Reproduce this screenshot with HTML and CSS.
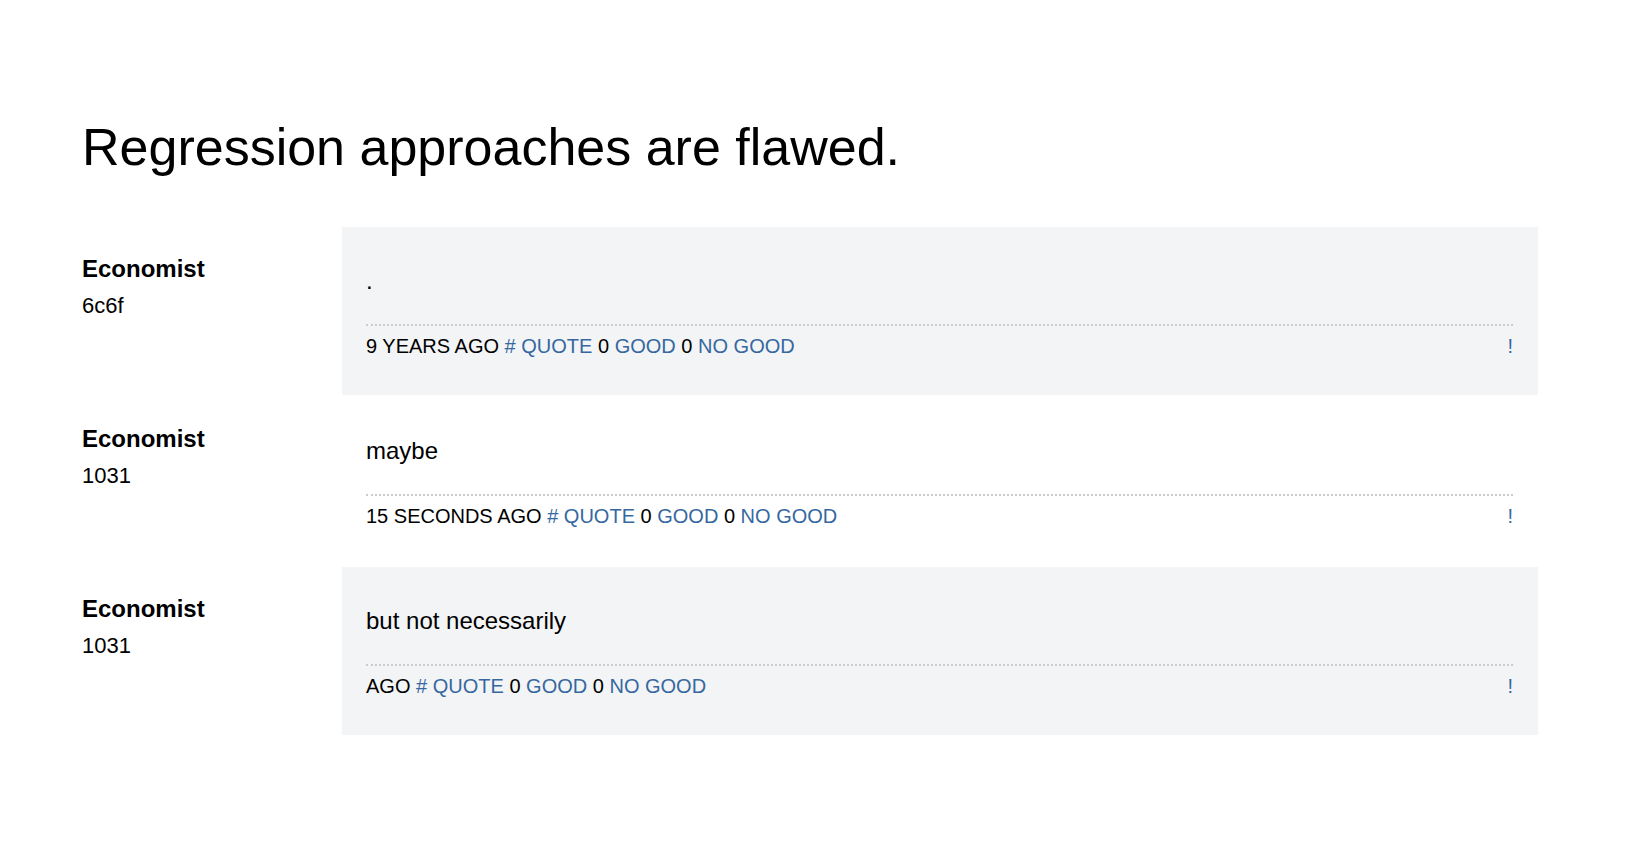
FILE: index.html
```html
<!DOCTYPE html>
<html>
<head>
<meta charset="utf-8">
<link rel="stylesheet" href="styles.css">
</head>
<body>
<div class="page">
  <h1 class="title">Regression approaches are flawed.</h1>
  <div class="thread">
    <div class="post post-shaded">
      <div class="author">
        <div class="name">Economist</div>
        <div class="uid">6c6f</div>
      </div>
      <div class="card">
        <div class="content">.</div>
        <div class="meta">
          <div class="meta-left">9 YEARS AGO <a class="link">#</a> <a class="link">QUOTE</a> 0 <a class="link">GOOD</a> 0 <a class="link">NO GOOD</a></div>
          <a class="link">!</a>
        </div>
      </div>
    </div>
    <div class="post">
      <div class="author">
        <div class="name">Economist</div>
        <div class="uid">1031</div>
      </div>
      <div class="card">
        <div class="content">maybe</div>
        <div class="meta">
          <div class="meta-left">15 SECONDS AGO <a class="link">#</a> <a class="link">QUOTE</a> 0 <a class="link">GOOD</a> 0 <a class="link">NO GOOD</a></div>
          <a class="link">!</a>
        </div>
      </div>
    </div>
    <div class="post post-shaded">
      <div class="author">
        <div class="name">Economist</div>
        <div class="uid">1031</div>
      </div>
      <div class="card">
        <div class="content">but not necessarily</div>
        <div class="meta">
          <div class="meta-left">AGO <a class="link">#</a> <a class="link">QUOTE</a> 0 <a class="link">GOOD</a> 0 <a class="link">NO GOOD</a></div>
          <a class="link">!</a>
        </div>
      </div>
    </div>
  </div>
</div>
</body>
</html>
```
FILE: styles.css
```css
html, body {
  margin: 0;
  padding: 0;
  background: #ffffff;
}
body {
  font-family: "Liberation Sans", Arial, sans-serif;
  color: #000000;
}
.page {
  padding: 116px 0 0 82px;
}
.title {
  margin: 0 0 49px 0;
  font-size: 52px;
  font-weight: normal;
  line-height: 62.4px;
}
.thread {
  display: flex;
  flex-direction: column;
  gap: 2px;
}
.post {
  display: flex;
}
.author {
  width: 260px;
  flex: none;
  padding-top: 24px;
}
.name {
  font-size: 24px;
  font-weight: bold;
  line-height: 36px;
}
.uid {
  margin-top: 2px;
  font-size: 22px;
  line-height: 33px;
}
.card {
  width: 1196px;
  box-sizing: border-box;
  padding: 36px 25px 34px 24px;
}
.post-shaded .card {
  background: #f3f4f6;
}
.content {
  font-size: 24px;
  line-height: 36px;
  margin-bottom: 25px;
}
.meta {
  display: flex;
  justify-content: space-between;
  border-top: 2px dotted #cccccc;
  padding-top: 5px;
  font-size: 20px;
  line-height: 30px;
}
.link {
  color: #36689f;
  text-decoration: none;
}
```
